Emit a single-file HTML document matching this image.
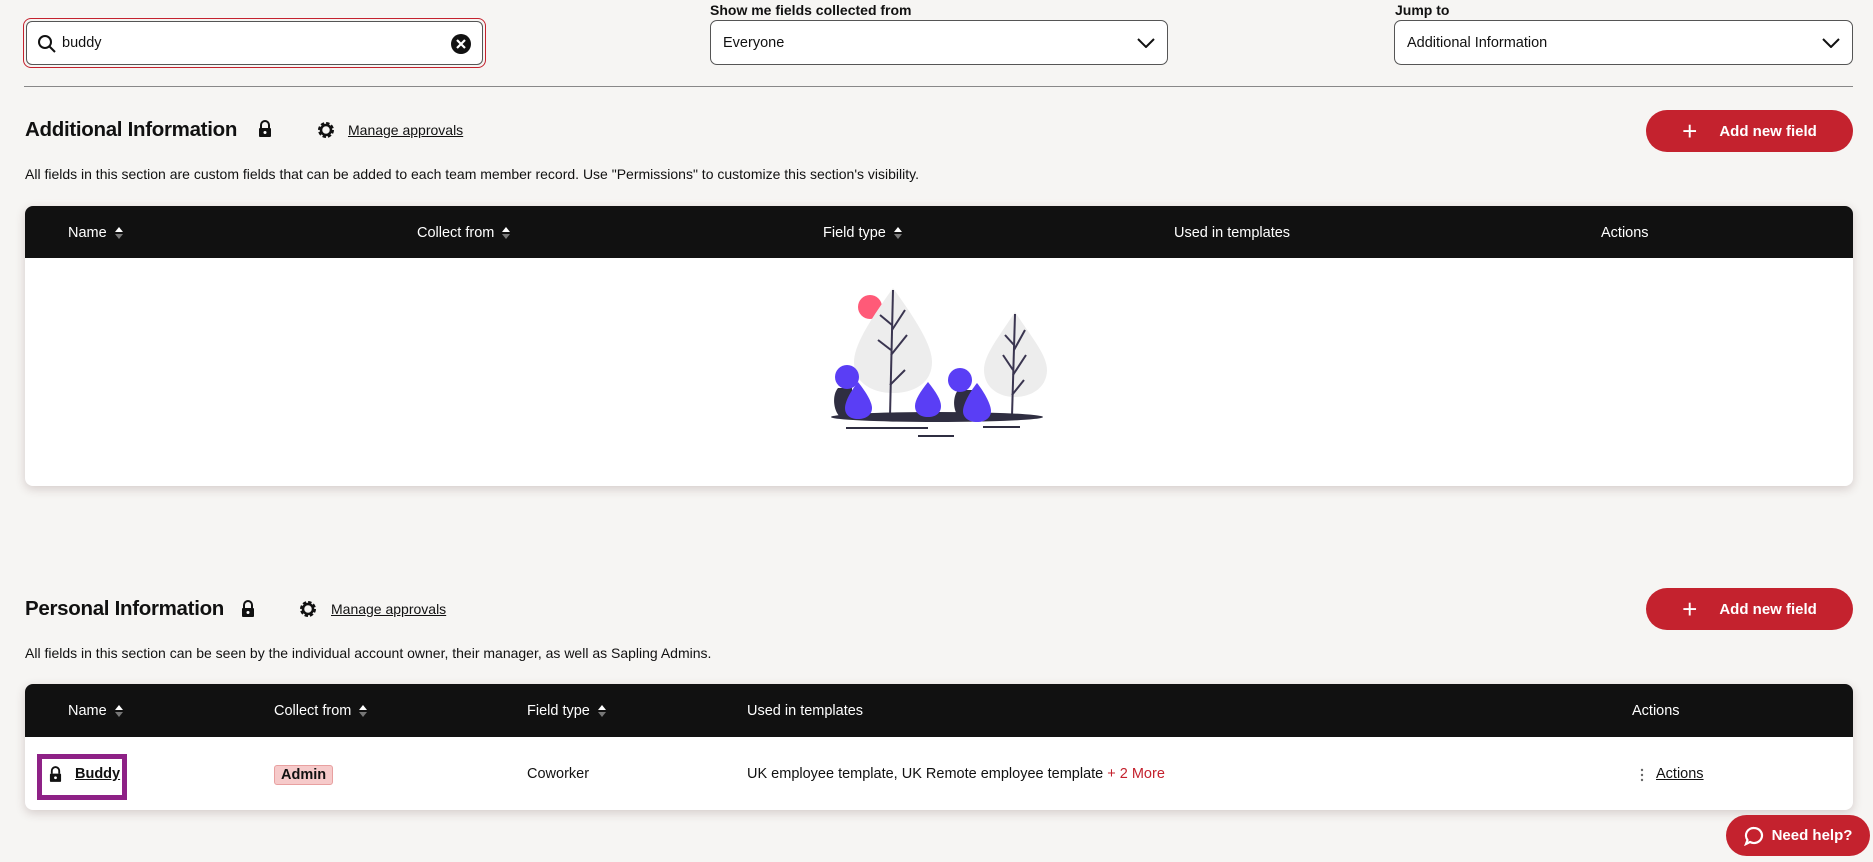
<!DOCTYPE html>
<html><head><meta charset="utf-8"><style>
*{box-sizing:border-box;margin:0;padding:0}
body{width:1873px;height:862px;overflow:hidden;background:#f6f5f3;font-family:"Liberation Sans",sans-serif;color:#111;position:relative}
.a{position:absolute}
.lbl{font-size:14px;font-weight:bold;white-space:nowrap}
.dd{background:#fff;border:1px solid #555;border-radius:7px;height:45px;font-size:14.5px;padding:0 12px;display:flex;align-items:center;justify-content:space-between}
.title{font-size:20.5px;font-weight:bold;white-space:nowrap;letter-spacing:-0.3px}
.ma{font-size:14px;text-decoration:underline;white-space:nowrap}
.btn{background:#c4222e;color:#fff;border-radius:22px;font-weight:bold;font-size:15px;display:flex;align-items:center;justify-content:center;gap:22px}
.desc{font-size:14px;white-space:nowrap}
.tbl{background:#fff;border-radius:8px;box-shadow:0 3px 10px rgba(80,40,40,.2);overflow:hidden}
.th{background:#111;color:#fff;position:absolute;left:0;right:0;top:0;font-size:14.5px}
.th span{position:absolute;white-space:nowrap}
.sort{display:inline-block;margin-left:8px;vertical-align:middle;width:8px;height:12px;position:relative}
.sort:before{content:"";position:absolute;top:0;left:0;border-left:4px solid transparent;border-right:4px solid transparent;border-bottom:5px solid #fff}
.sort:after{content:"";position:absolute;bottom:0;left:0;border-left:4px solid transparent;border-right:4px solid transparent;border-top:5px solid #777}
.td{position:absolute;font-size:14.5px;white-space:nowrap}
</style></head><body>

<!-- search -->
<div class="a" style="left:23px;top:18px;width:463px;height:50px;border:1.5px solid #c4222e;border-radius:8px;padding:2px">
 <div style="background:#fff;border:1px solid #555;border-radius:6px;height:100%;position:relative">
  <svg class="a" style="left:10px;top:12px" width="20" height="20" viewBox="0 0 20 20"><circle cx="8" cy="8" r="6" fill="none" stroke="#111" stroke-width="2"/><line x1="12.5" y1="12.5" x2="18" y2="18" stroke="#111" stroke-width="2"/></svg>
  <span class="a" style="left:35px;top:13px;font-size:14.5px">buddy</span>
  <svg class="a" style="left:423px;top:11px" width="22" height="22" viewBox="0 0 22 22"><circle cx="11" cy="11" r="10" fill="#111"/><path d="M7 7L15 15M15 7L7 15" stroke="#fff" stroke-width="2.2"/></svg>
 </div>
</div>

<div class="a lbl" style="left:710px;top:2px">Show me fields collected from</div>
<div class="a dd" style="left:710px;top:20px;width:458px">Everyone<svg width="18" height="10" viewBox="0 0 18 10"><path d="M1 1L9 9L17 1" fill="none" stroke="#111" stroke-width="2"/></svg></div>
<div class="a lbl" style="left:1395px;top:2px">Jump to</div>
<div class="a dd" style="left:1394px;top:20px;width:459px">Additional Information<svg width="18" height="10" viewBox="0 0 18 10"><path d="M1 1L9 9L17 1" fill="none" stroke="#111" stroke-width="2"/></svg></div>

<div class="a" style="left:24px;top:86px;width:1829px;height:1px;background:#888"></div>

<!-- section 1 -->
<div class="a title" style="left:25px;top:118px">Additional Information</div>
<svg class="a" style="left:258px;top:120px" width="14" height="18" viewBox="0 0 14 18"><path d="M3 8V5a4 4 0 0 1 8 0v3" fill="none" stroke="#111" stroke-width="2"/><rect x="1" y="8" width="12" height="9" rx="1" fill="#111"/><circle cx="7" cy="12.5" r="1.5" fill="#fff"/></svg>
<svg class="a" style="left:316px;top:120px" width="20" height="20" viewBox="0 0 20 20"><circle cx="10" cy="10" r="6" fill="none" stroke="#111" stroke-width="4" stroke-dasharray="3 1.7"/><circle cx="10" cy="10" r="5" fill="none" stroke="#111" stroke-width="2.5"/></svg>
<div class="a ma" style="left:348px;top:122px">Manage approvals</div>
<div class="a btn" style="left:1646px;top:110px;width:207px;height:42px"><span style="font-size:26px;font-weight:normal;line-height:1">+</span><span>Add new field</span></div>
<div class="a desc" style="left:25px;top:166px">All fields in this section are custom fields that can be added to each team member record. Use "Permissions" to customize this section's visibility.</div>

<div class="a tbl" style="left:25px;top:206px;width:1828px;height:280px">
 <div class="th" style="height:52px">
  <span style="left:43px;top:19px">Name<i class="sort"></i></span>
  <span style="left:392px;top:19px">Collect from<i class="sort"></i></span>
  <span style="left:798px;top:19px">Field type<i class="sort"></i></span>
  <span style="left:1149px;top:19px">Used in templates</span>
  <span style="left:1576px;top:19px">Actions</span>
 </div>
</div>

<svg class="a" style="left:800px;top:260px" width="300" height="190" viewBox="800 260 300 190">
 <circle cx="870" cy="307" r="12" fill="#ff5a78"/>
 <path d="M893 288 C870 320 854 345 854 362 C854 383 872 393 893 393 C914 393 932 383 932 362 C932 345 916 320 893 288Z" fill="#ededed"/>
 <path d="M1015 312 C998 338 984 355 984 370 C984 387 998 397 1015 397 C1032 397 1047 387 1047 370 C1047 355 1032 338 1015 312Z" fill="#ededed"/>
 <g stroke="#3a3550" stroke-width="2" fill="none">
  <path d="M893 290 L890 416"/><path d="M892 325L880 315M892 330L905 310M891 350L878 340M891 355L907 335M890 385L905 370"/>
  <path d="M1015 314 L1012 416"/><path d="M1014 345L1005 335M1014 350L1025 330M1013 370L1003 355M1013 375L1026 355M1012 395L1024 380"/>
 </g>
 <ellipse cx="937" cy="417" rx="106" ry="5" fill="#2f2e41"/>
 <rect x="846" y="427" width="82" height="2" fill="#2f2e41"/>
 <rect x="918" y="435" width="36" height="2" fill="#2f2e41"/>
 <rect x="983" y="426" width="37" height="2" fill="#2f2e41"/>
 <path d="M838 388 C832 395 833 410 840 417 L852 417 L852 388Z" fill="#2f2e41"/>
 <circle cx="847" cy="377" r="12" fill="#5a3ef5"/>
 <path d="M858 382 C850 392 845 402 845 408 C845 415 850 419 858 419 C866 419 872 415 872 408 C872 402 866 392 858 382Z" fill="#5a3ef5"/>
 <path d="M928 382 C920 392 915 400 915 406 C915 413 920 417 928 417 C936 417 941 413 941 406 C941 400 936 392 928 382Z" fill="#5a3ef5"/>
 <path d="M958 390 C952 398 953 412 960 418 L975 418 L975 390Z" fill="#2f2e41"/>
 <circle cx="960" cy="380" r="12" fill="#5a3ef5"/>
 <path d="M977 383 C969 393 963 405 963 411 C963 418 969 422 977 422 C985 422 991 418 991 411 C991 405 985 393 977 383Z" fill="#5a3ef5"/>
</svg>

<!-- section 2 -->
<div class="a title" style="left:25px;top:597px">Personal Information</div>
<svg class="a" style="left:241px;top:600px" width="14" height="18" viewBox="0 0 14 18"><path d="M3 8V5a4 4 0 0 1 8 0v3" fill="none" stroke="#111" stroke-width="2"/><rect x="1" y="8" width="12" height="9" rx="1" fill="#111"/><circle cx="7" cy="12.5" r="1.5" fill="#fff"/></svg>
<svg class="a" style="left:298px;top:599px" width="20" height="20" viewBox="0 0 20 20"><circle cx="10" cy="10" r="6" fill="none" stroke="#111" stroke-width="4" stroke-dasharray="3 1.7"/><circle cx="10" cy="10" r="5" fill="none" stroke="#111" stroke-width="2.5"/></svg>
<div class="a ma" style="left:331px;top:601px">Manage approvals</div>
<div class="a btn" style="left:1646px;top:588px;width:207px;height:42px"><span style="font-size:26px;font-weight:normal;line-height:1">+</span><span>Add new field</span></div>
<div class="a desc" style="left:25px;top:645px">All fields in this section can be seen by the individual account owner, their manager, as well as Sapling Admins.</div>

<div class="a tbl" style="left:25px;top:684px;width:1828px;height:126px">
 <div class="th" style="height:53px">
  <span style="left:43px;top:19px">Name<i class="sort"></i></span>
  <span style="left:249px;top:19px">Collect from<i class="sort"></i></span>
  <span style="left:502px;top:19px">Field type<i class="sort"></i></span>
  <span style="left:722px;top:19px">Used in templates</span>
  <span style="left:1607px;top:19px">Actions</span>
 </div>
 <div class="a" style="left:12px;top:70px;height:46px;border:5px solid #8e2186;width:90px"></div>
 <svg class="a" style="left:24px;top:82px" width="13" height="17" viewBox="0 0 14 18"><path d="M3 8V5a4 4 0 0 1 8 0v3" fill="none" stroke="#111" stroke-width="2"/><rect x="1" y="8" width="12" height="9" rx="1" fill="#111"/><circle cx="7" cy="12.5" r="1.5" fill="#fff"/></svg>
 <div class="td" style="left:50px;top:82px;font-weight:bold;text-decoration:underline">Buddy</div>
 <div class="td" style="left:249px;top:81px;background:#f6caca;border:1px solid #e8a0a0;border-radius:3px;padding:1px 6px;font-weight:bold">Admin</div>
 <div class="td" style="left:502px;top:82px">Coworker</div>
 <div class="td" style="left:722px;top:82px">UK employee template, UK Remote employee template <span style="color:#c4222e">+ 2 More</span></div>
 <svg class="a" style="left:1615px;top:84px" width="4" height="14" viewBox="0 0 4 14"><circle cx="2" cy="2" r="1.2" fill="#666"/><circle cx="2" cy="7" r="1.2" fill="#666"/><circle cx="2" cy="12" r="1.2" fill="#666"/></svg>
 <div class="td" style="left:1631px;top:82px;text-decoration:underline">Actions</div>
</div>

<div class="a btn" style="left:1726px;top:815px;width:144px;height:41px;border-radius:21px;gap:8px;font-size:15px">
 <svg width="20" height="20" viewBox="0 0 20 20"><path d="M10 2a8 7.5 0 1 1-4 14L2 18l1.5-4A7.5 7.5 0 0 1 10 2Z" fill="none" stroke="#fff" stroke-width="2.2"/></svg><span>Need help?</span>
</div>
</body></html>
